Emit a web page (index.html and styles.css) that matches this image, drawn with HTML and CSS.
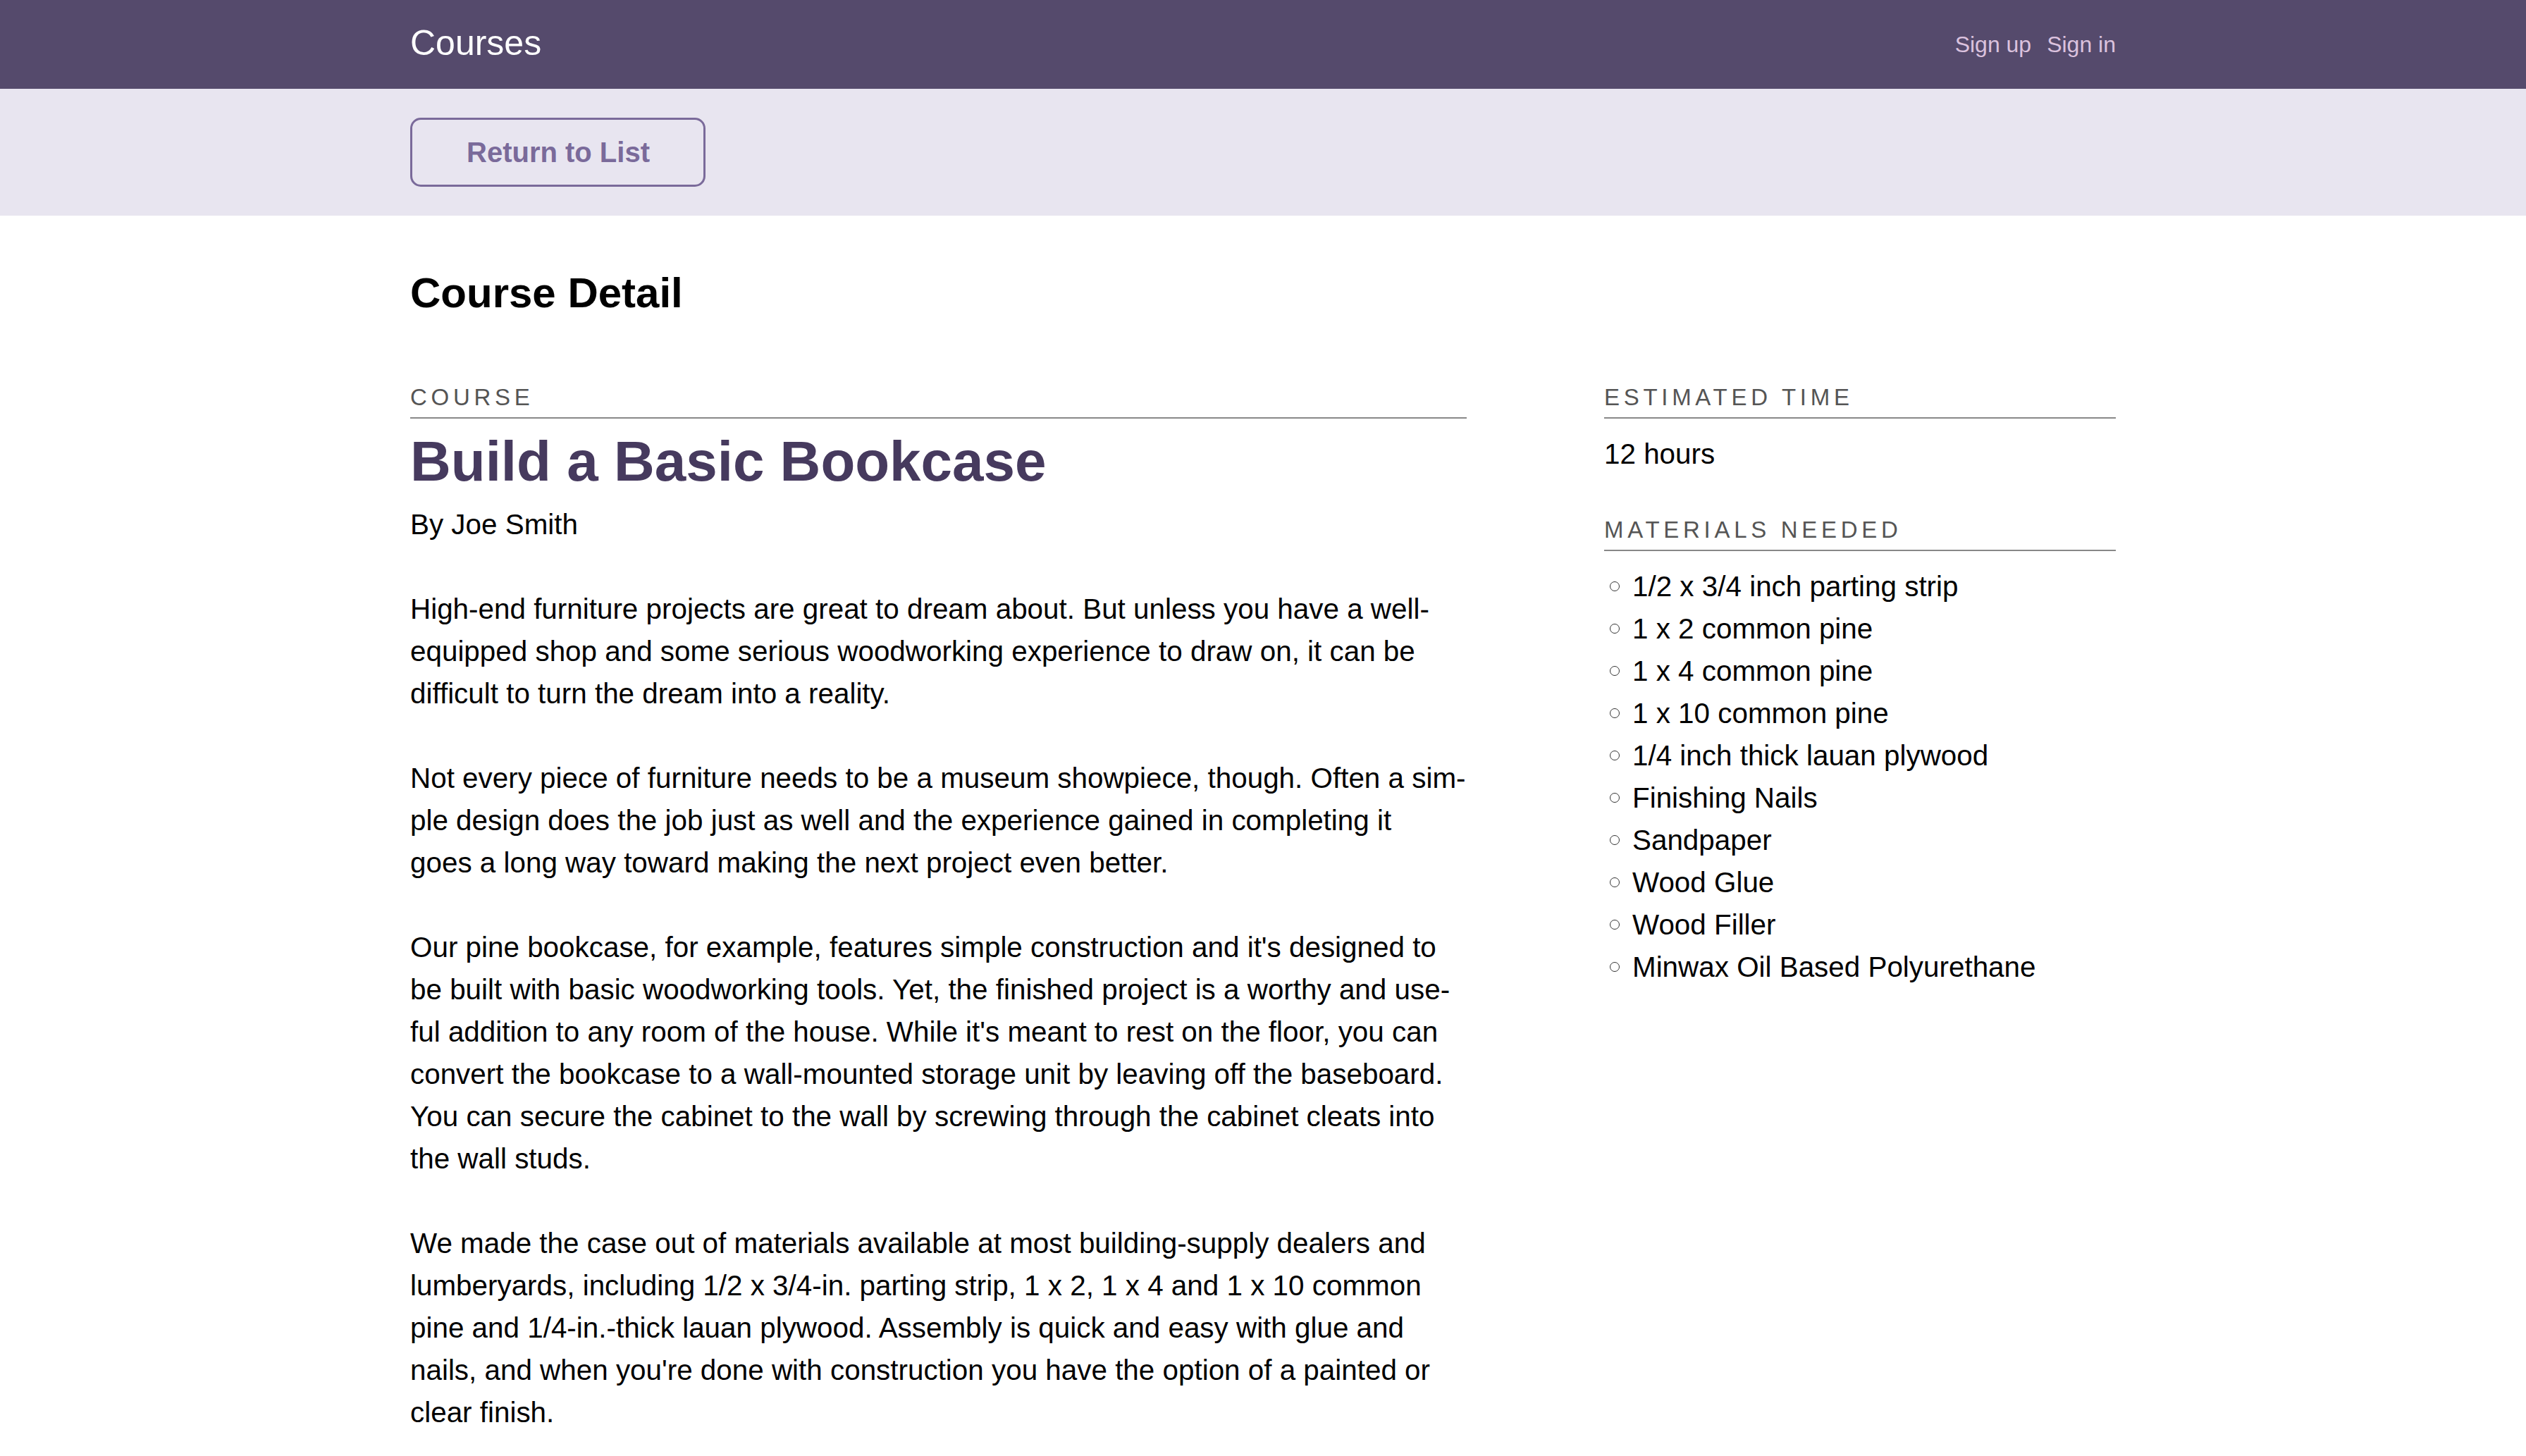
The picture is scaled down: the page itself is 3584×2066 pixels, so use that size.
FILE: index.html
```html
<!DOCTYPE html>
<html lang="en">
<head>
<meta charset="utf-8">
<title>Course Detail</title>
<link rel="stylesheet" href="styles.css">
</head>
<body>
<header class="topbar">
  <div class="wrap topbar-inner">
    <a class="brand" href="#">Courses</a>
    <nav class="auth">
      <a href="#">Sign up</a>
      <a href="#">Sign in</a>
    </nav>
  </div>
</header>
<div class="subbar">
  <div class="wrap">
    <a class="btn-outline" href="#">Return to List</a>
  </div>
</div>
<main class="wrap main">
  <h1 class="page-title">Course Detail</h1>
  <div class="columns">
    <section class="col-main">
      <h3 class="label">Course</h3>
      <h2 class="course-title">Build a Basic Bookcase</h2>
      <p class="author">By Joe Smith</p>
      <div class="description">
        <p>High-end furniture projects are great to dream about. But unless you have a well-<br>equipped shop and some serious woodworking experience to draw on, it can be<br>difficult to turn the dream into a reality.</p>
        <p>Not every piece of furniture needs to be a museum showpiece, though. Often a sim-<br>ple design does the job just as well and the experience gained in completing it<br>goes a long way toward making the next project even better.</p>
        <p>Our pine bookcase, for example, features simple construction and it's designed to<br>be built with basic woodworking tools. Yet, the finished project is a worthy and use-<br>ful addition to any room of the house. While it's meant to rest on the floor, you can<br>convert the bookcase to a wall-mounted storage unit by leaving off the baseboard.<br>You can secure the cabinet to the wall by screwing through the cabinet cleats into<br>the wall studs.</p>
        <p>We made the case out of materials available at most building-supply dealers and<br>lumberyards, including 1/2 x 3/4-in. parting strip, 1 x 2, 1 x 4 and 1 x 10 common<br>pine and 1/4-in.-thick lauan plywood. Assembly is quick and easy with glue and<br>nails, and when you're done with construction you have the option of a painted or<br>clear finish.</p>
      </div>
    </section>
    <aside class="col-side">
      <h3 class="label">Estimated Time</h3>
      <p class="side-value">12 hours</p>
      <h3 class="label label-spaced">Materials Needed</h3>
      <ul class="materials">
        <li>1/2 x 3/4 inch parting strip</li>
        <li>1 x 2 common pine</li>
        <li>1 x 4 common pine</li>
        <li>1 x 10 common pine</li>
        <li>1/4 inch thick lauan plywood</li>
        <li>Finishing Nails</li>
        <li>Sandpaper</li>
        <li>Wood Glue</li>
        <li>Wood Filler</li>
        <li>Minwax Oil Based Polyurethane</li>
      </ul>
    </aside>
  </div>
</main>
</body>
</html>
```

FILE: styles.css
```css
* {
  box-sizing: border-box;
}

html, body {
  margin: 0;
  padding: 0;
  background: #ffffff;
}

body {
  font-family: "Liberation Sans", Arial, Helvetica, sans-serif;
  color: #000000;
}

a {
  text-decoration: none;
}

.wrap {
  width: 2420px;
  margin: 0 auto;
}

/* top bar */
.topbar {
  background: #554a6c;
  height: 126px;
}

.topbar-inner {
  height: 100%;
  display: flex;
  align-items: center;
  justify-content: space-between;
}

.brand {
  color: #ffffff;
  font-size: 50px;
  line-height: 50px;
  margin-bottom: 5px;
}

.auth {
  display: flex;
  gap: 22px;
}

.auth a {
  color: #dbc2de;
  font-size: 32px;
  line-height: 40px;
}

/* sub bar */
.subbar {
  background: #e8e5f0;
  padding: 41px 0 41px;
}

.btn-outline {
  display: inline-block;
  border: 3px solid #7a6a9a;
  border-radius: 15px;
  padding: 22px 76px 22px 77px;
  color: #7a6a9a;
  font-size: 40px;
  font-weight: bold;
  line-height: 48px;
}

/* main */
.main {
  padding-top: 74px;
  padding-bottom: 40px;
}

.page-title {
  margin: 0 0 92px;
  font-size: 60px;
  line-height: 72px;
  font-weight: bold;
}

.columns {
  display: grid;
  grid-template-columns: 1499fr 726fr;
  column-gap: 195px;
  align-items: start;
}

.label {
  margin: 0;
  font-size: 33px;
  line-height: 40px;
  font-weight: normal;
  text-transform: uppercase;
  letter-spacing: 5.7px;
  color: #555555;
  padding-bottom: 8px;
  border-bottom: 2px solid #888888;
}

.label-spaced {
  margin-top: 58px;
}

.course-title {
  margin: 13px 0 0;
  font-size: 80px;
  line-height: 96px;
  font-weight: bold;
  color: #463a5e;
}

.author {
  margin: 11px 0 0;
  font-size: 40.4px;
  line-height: 60px;
}

.description p {
  margin: 60px 0 0;
  font-size: 40.4px;
  line-height: 60px;
  white-space: nowrap;
}

.side-value {
  margin: 20px 0 0;
  font-size: 40.4px;
  line-height: 60px;
}

.materials {
  list-style: none;
  margin: 20px 0 0;
  padding: 0;
}

.materials li {
  display: flex;
  align-items: center;
  font-size: 40.4px;
  line-height: 60px;
}

.materials li::before {
  content: "";
  flex: none;
  width: 12px;
  height: 12px;
  margin: 0 18px 1px 8px;
  border: 1.6px solid #333333;
  border-radius: 50%;
}
```
